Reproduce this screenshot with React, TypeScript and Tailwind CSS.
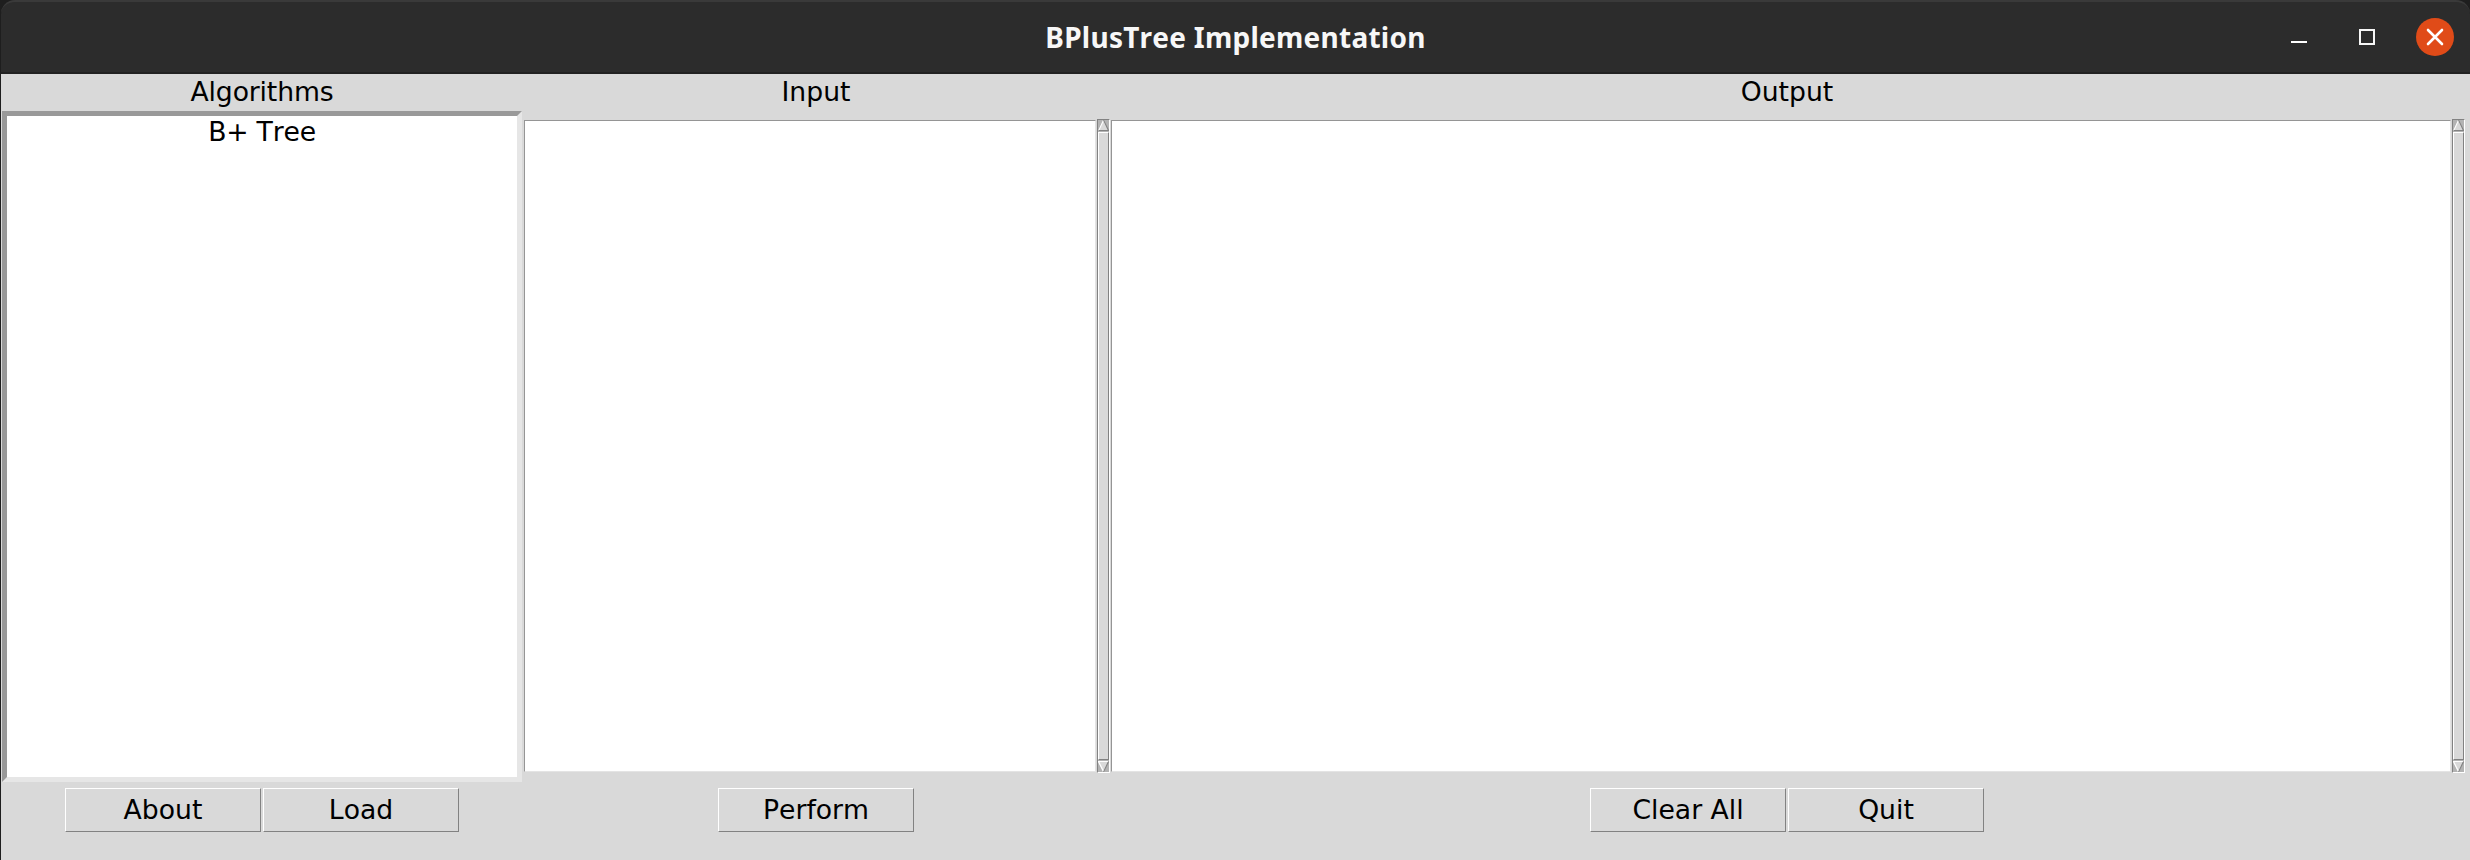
import type { ReactNode } from "react";

function ArrowUp() {
  return (
    <svg width="11" height="11" viewBox="0 0 11 11" className="block shrink-0">
      <rect width="11" height="11" fill="#b3b3b3" />
      <polygon points="5.5,0 11,11 0,11" fill="#d9d9d9" />
      <polygon points="5,0 6.2,0 1.6,10 0,11" fill="#ffffff" />
      <polygon points="5,0 6,0 11,10 11,11 0,11 1,10 9.6,10" fill="#828282" />
    </svg>
  );
}

function ArrowDown() {
  return (
    <svg width="11" height="11" viewBox="0 0 11 11" className="block shrink-0">
      <rect width="11" height="11" fill="#b3b3b3" />
      <polygon points="0,0 11,0 5.5,11" fill="#d9d9d9" />
      <polygon points="0,0 11,0 10,1 1.4,1 6,10 5.5,11 5,11 0,1" fill="#ffffff" />
      <polygon points="9.6,1 11,0 11,1 6,11 5,11" fill="#828282" />
    </svg>
  );
}

function Scrollbar() {
  return (
    <div className="flex h-[654px] w-[13px] shrink-0 flex-col border border-t-[#828282] border-r-white border-b-white border-l-[#828282] bg-[#b3b3b3]">
      <ArrowUp />
      <div className="my-px flex-1 border border-t-white border-r-[#828282] border-b-[#828282] border-l-white bg-[#d9d9d9]" />
      <ArrowDown />
    </div>
  );
}

function Heading({ children }: { children: ReactNode }) {
  return <h2 className="h-8 text-center leading-8">{children}</h2>;
}

function TkButton({ children }: { children: ReactNode }) {
  return (
    <button className="flex h-11 w-[196px] items-center justify-center border border-t-white border-r-[#828282] border-b-[#828282] border-l-white bg-[#d9d9d9] leading-8">
      {children}
    </button>
  );
}

function TextPane({ title, buttons, className }: { title: string; buttons: string[]; className: string }) {
  return (
    <section className={className}>
      <div className="pr-[2px]">
        <Heading>{title}</Heading>
      </div>
      <div className="mt-[11px] flex items-center gap-px">
        <div className="h-[652px] flex-1 border border-t-[#959595] border-r-[#e4e4e4] border-b-[#e4e4e4] border-l-[#959595] bg-white" />
        <Scrollbar />
      </div>
      <div className="mt-[15px] flex justify-center gap-[2px] pr-[2px]">
        {buttons.map((b) => (
          <TkButton key={b}>{b}</TkButton>
        ))}
      </div>
    </section>
  );
}

export default function App() {
  return (
    <div className="h-[860px] w-[2470px] overflow-hidden bg-[#1e1e1e] pl-px font-['DejaVu_Sans',sans-serif] text-[26.67px] text-black [font-kerning:none]">
      <header className="grid h-[74px] grid-cols-[1fr_auto_1fr] rounded-t-[14px] border-t-2 border-b-2 border-t-[#3a3a3a] border-b-[#222222] bg-[#2c2c2c]">
        <div />
        <h1 className="self-center font-['Noto_Sans',sans-serif] text-[28px] leading-[70px] font-bold tracking-[0.25px] whitespace-nowrap text-[#f7f7f7]">
          BPlusTree Implementation
        </h1>
        <div className="flex items-center justify-end gap-[41px] pr-4">
          <svg width="16" height="16" className="mr-[11px]">
            <rect x="0" y="12" width="16" height="2" fill="#fff" />
          </svg>
          <svg width="16" height="16">
            <rect x="1" y="1" width="14" height="14" fill="none" stroke="#f7f7f7" strokeWidth="2" />
          </svg>
          <svg width="38" height="38" viewBox="0 0 38 38">
            <circle cx="19" cy="19" r="19" fill="#e04b18" />
            <path d="M12 12 L26 26 M26 12 L12 26" stroke="#fff" strokeWidth="2.6" strokeLinecap="round" />
          </svg>
        </div>
      </header>
      <main className="flex h-[786px] bg-[#d9d9d9] pt-[2px] pl-px">
        <section className="mr-[2px] w-[520px]">
          <div className="tracking-[-0.15px]">
            <Heading>Algorithms</Heading>
          </div>
          <div className="mt-[3px] h-[671px] border-[5px] border-t-[#999999] border-r-[#e6e6e6] border-b-[#e6e6e6] border-l-[#999999] bg-white text-center leading-8 tracking-[-0.2px]">
            B+ Tree
          </div>
          <div className="mt-[6px] flex justify-center gap-[2px]">
            <TkButton>About</TkButton>
            <TkButton>Load</TkButton>
          </div>
        </section>
        <TextPane title="Input" buttons={["Perform"]} className="mr-px w-[586px]" />
        <TextPane title="Output" buttons={["Clear All", "Quit"]} className="w-[1354px]" />
      </main>
    </div>
  );
}
